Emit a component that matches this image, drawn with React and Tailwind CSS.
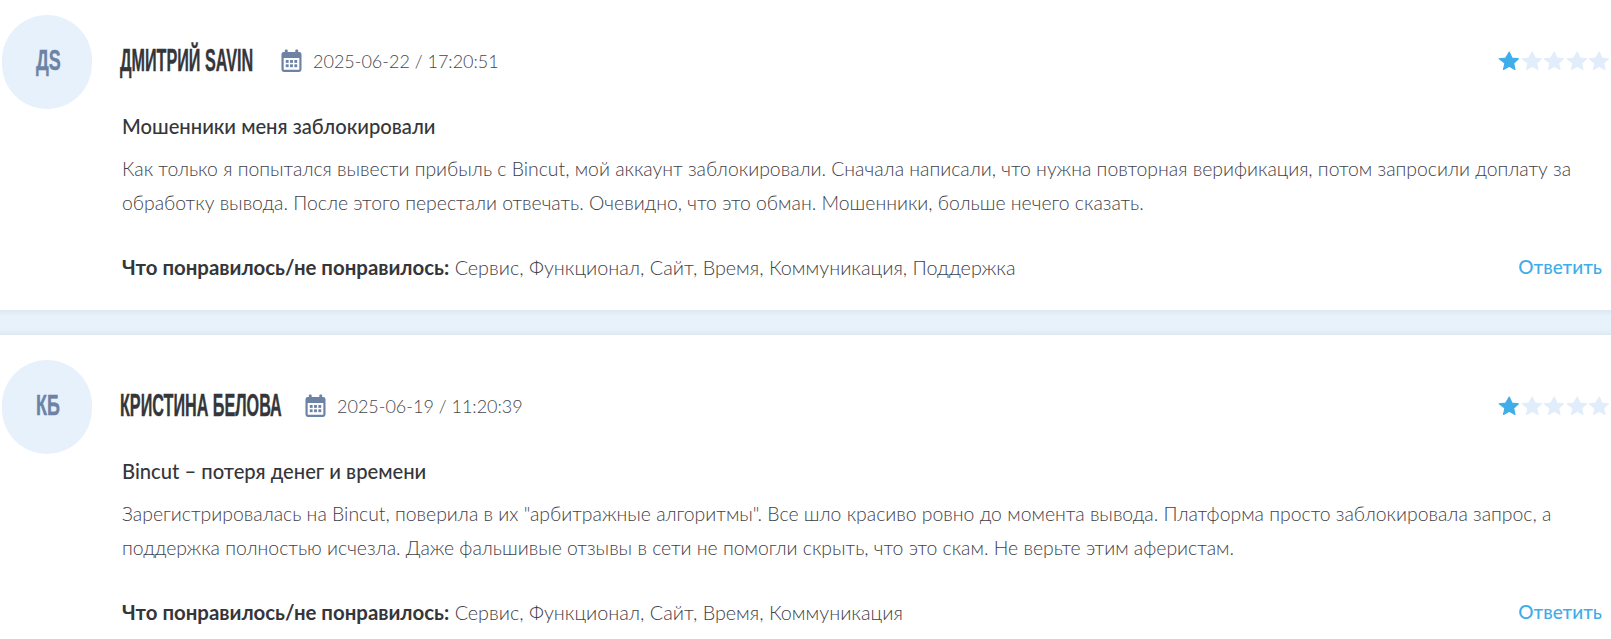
const FONT = "font-['Lato','Noto_Sans',sans-serif]";
const DISPLAY = "font-['Liberation_Sans',sans-serif] font-bold";

function Star({ on }) {
  return (
    <svg viewBox="0 0 24 24" className="w-[22.500px] h-[22.500px] shrink-0">
      <path
        d="M12 2.2l2.9 6.300 6.900.8-5.100 4.700 1.400 6.800-6.100-3.400-6.100 3.400 1.400-6.800L1.300 9.300l6.900-.8z"
        fill={on ? "#3fadea" : "#e1edfb"}
        stroke={on ? "#3fadea" : "#e1edfb"}
        strokeWidth="1.2"
        strokeLinejoin="round"
      />
    </svg>
  );
}

function Calendar() {
  return (
    <svg viewBox="0 0 22 24" className="w-[21px] h-[25px] shrink-0 -mt-[2px]" fill="#6d83a6">
      <rect x="4" y="0.5" width="3" height="5" rx="1" />
      <rect x="15" y="0.5" width="3" height="5" rx="1" />
      <path fillRule="evenodd" d="M3 3h16a2.500 2.500 0 0 1 2.500 2.500v16a2.500 2.500 0 0 1-2.500 2.500H3a2.500 2.500 0 0 1-2.500-2.500v-16A2.500 2.500 0 0 1 3 3zm-.2 6.500v11.700c0 .5.4.6.6.6h15.200c.3 0 .6-.2.6-.6V9.500z" />
      <rect x="5" y="11.500" width="3" height="3" />
      <rect x="9.500" y="11.500" width="3" height="3" />
      <rect x="14" y="11.500" width="3" height="3" />
      <rect x="5" y="16" width="3" height="3" />
      <rect x="9.500" y="16" width="3" height="3" />
      <rect x="14" y="16" width="3" height="3" />
    </svg>
  );
}

function Review({ first, initials, name, nameW, date, title, lines, tags }) {
  return (
    <article className={`bg-white pl-[2px] pr-[9px] ${first ? "pt-[15px] h-[310px]" : "pt-[25px] h-[304px]"}`}>
      <div className="flex items-start">
        <div className="w-[90px] h-[94px] rounded-full bg-[#e7f1fb] flex items-center justify-center shrink-0">
          <span className="w-[25px] mb-[5px] whitespace-nowrap">
            <span className={`${DISPLAY} inline-block origin-left scale-x-[0.6] translate-x-[1px] text-[30px] text-[#6d83a6] [-webkit-text-stroke:0.4px_#6d83a6]`}>{initials}</span>
          </span>
        </div>
        <div className="flex-1 flex items-center h-[92px] ml-[28px] -mr-[6px]">
          <span className={`${nameW} whitespace-nowrap`}>
            <span className={`${DISPLAY} inline-block origin-left scale-x-[0.53] text-[30.500px] text-[#35363a] uppercase [-webkit-text-stroke:0.4px_#35363a]`}>{name}</span>
          </span>
          <span className="ml-[24px]"><Calendar /></span>
          <span className={`${FONT} font-light text-[18px] text-[#45474d] ml-[11px] whitespace-nowrap`}>{date}</span>
          <div className="ml-auto flex gap-0 w-[110px]">
            <Star on />
            <Star />
            <Star />
            <Star />
            <Star />
          </div>
        </div>
      </div>
      <div className="pl-[120px]">
        <h3 className={`${FONT} font-medium text-[20.200px] leading-[24px] text-[#35363a] mt-[5px]`}>{title}</h3>
        <div className={`${FONT} font-light text-[19.400px] leading-[34px] text-[#3f4147] mt-[14px] whitespace-nowrap`}>
          {lines.map((l) => <p key={l}>{l}</p>)}
        </div>
        <div className="flex items-center justify-between mt-[30px]">
          <p className={`${FONT} font-light text-[19.800px] leading-[34px] text-[#3f4147] whitespace-nowrap`}>
            <b className="font-bold text-[20.400px] text-[#35363a]">Что понравилось/не понравилось:</b> {tags}
          </p>
          <a className={`${FONT} font-medium text-[19px] text-[#3fadea]`}>Ответить</a>
        </div>
      </div>
    </article>
  );
}

export default function App() {
  return (
    <div className="w-[1611px] h-[639px] overflow-hidden bg-white">
      <Review
        first
        initials="ДS"
        name="Дмитрий Savin"
        nameW="w-[137px]"
        date="2025-06-22 / 17:20:51"
        title="Мошенники меня заблокировали"
        lines={[
          "Как только я попытался вывести прибыль с Bincut, мой аккаунт заблокировали. Сначала написали, что нужна повторная верификация, потом запросили доплату за",
          "обработку вывода. После этого перестали отвечать. Очевидно, что это обман. Мошенники, больше нечего сказать.",
        ]}
        tags="Сервис, Функционал, Сайт, Время, Коммуникация, Поддержка"
      />
      <div className="h-[25px] bg-[linear-gradient(to_bottom,#dde8f1,#e8f2fb_25%,#e8f2fb_75%,#dde8f1)]" />
      <Review
        initials="КБ"
        name="Кристина Белова"
        nameW="w-[161px]"
        date="2025-06-19 / 11:20:39"
        title="Bincut – потеря денег и времени"
        lines={[
          'Зарегистрировалась на Bincut, поверила в их "арбитражные алгоритмы". Все шло красиво ровно до момента вывода. Платформа просто заблокировала запрос, а',
          "поддержка полностью исчезла. Даже фальшивые отзывы в сети не помогли скрыть, что это скам. Не верьте этим аферистам.",
        ]}
        tags="Сервис, Функционал, Сайт, Время, Коммуникация"
      />
    </div>
  );
}
